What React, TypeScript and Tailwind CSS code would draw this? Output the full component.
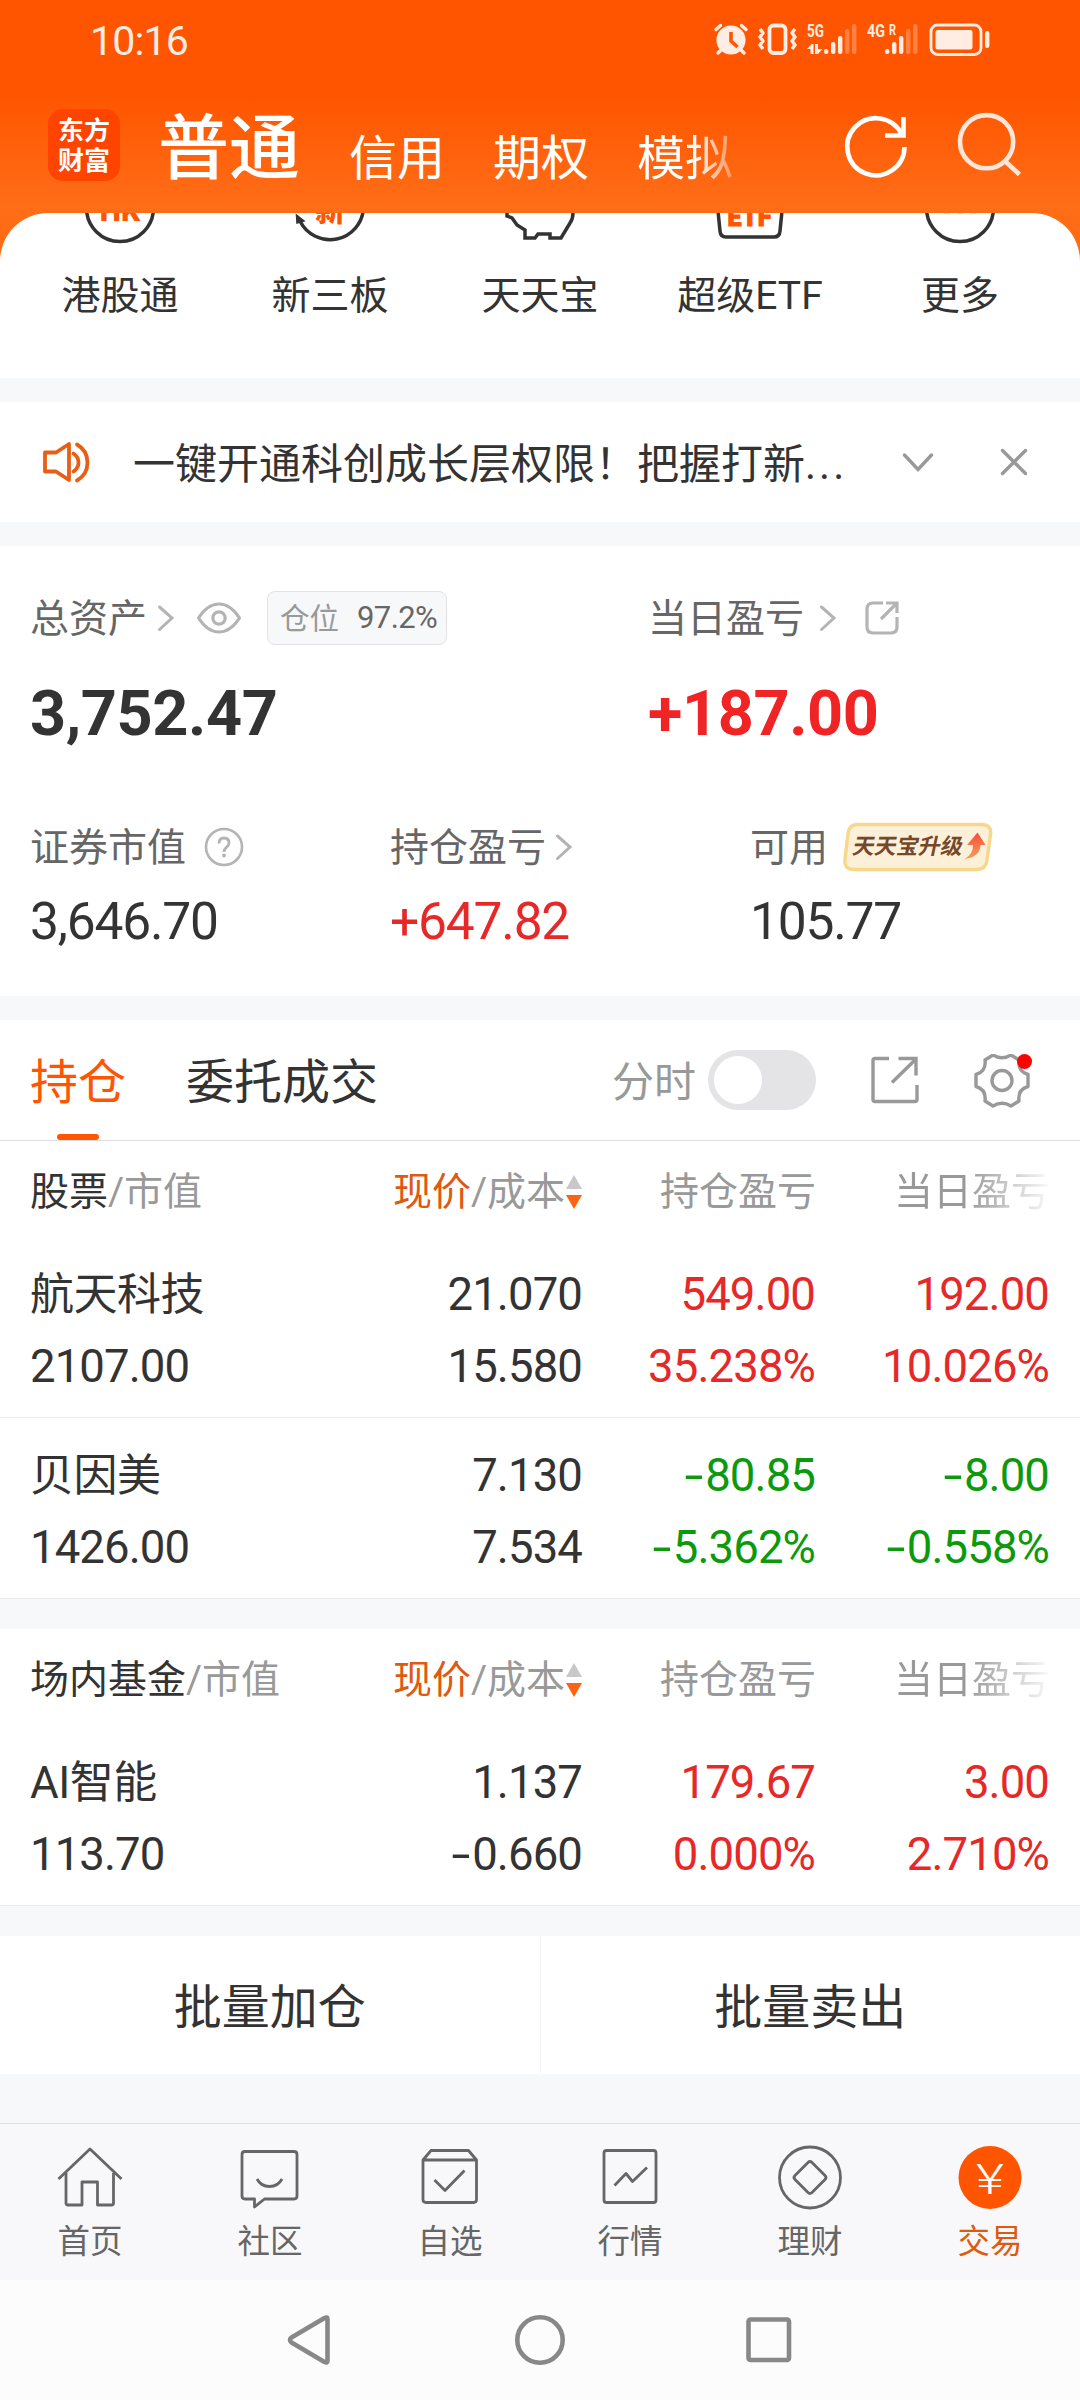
import type { ReactNode } from 'react';

type Tone = 'dark' | 'up' | 'down';

interface Cell {
  top: string;
  bottom: string;
  tone: Tone;
}

interface Holding {
  name: string;
  value: string;
  cells: Cell[];
}

const STOCKS: Holding[] = [
  {
    name: '航天科技',
    value: '2107.00',
    cells: [
      { top: '21.070', bottom: '15.580', tone: 'dark' },
      { top: '549.00', bottom: '35.238%', tone: 'up' },
      { top: '192.00', bottom: '10.026%', tone: 'up' },
    ],
  },
  {
    name: '贝因美',
    value: '1426.00',
    cells: [
      { top: '7.130', bottom: '7.534', tone: 'dark' },
      { top: '-80.85', bottom: '-5.362%', tone: 'down' },
      { top: '-8.00', bottom: '-0.558%', tone: 'down' },
    ],
  },
];

const FUNDS: Holding[] = [
  {
    name: 'AI智能',
    value: '113.70',
    cells: [
      { top: '1.137', bottom: '-0.660', tone: 'dark' },
      { top: '179.67', bottom: '0.000%', tone: 'up' },
      { top: '3.00', bottom: '2.710%', tone: 'up' },
    ],
  },
];

const TONES: Record<Tone, string> = {
  dark: 'text-[#333]',
  up: 'text-[#e62828]',
  down: 'text-[#0c9a0c]',
};

// Bars of a signal meter, from short to tall. The last two are unlit.
const BARS = [5, 12, 18, 25, 30];

function Signal({ x }: { x: number }) {
  return (
    <g>
      {BARS.map((h, i) => (
        <rect
          key={h}
          x={x + i * 7}
          y={54 - h}
          width="4.4"
          height={h}
          rx="2"
          opacity={i > 2 ? 0.3 : 1}
        />
      ))}
    </g>
  );
}

function StatusIcons() {
  return (
    <svg width="280" height="40" viewBox="712 20 280 40" fill="#ffece2">
      {/* Alarm */}
      <circle cx="731" cy="40" r="14.6" />
      <g fill="none" stroke="#ffece2" strokeWidth="3.4" strokeLinecap="round">
        <path d="M716 29.5l4.500-4M746 29.5l-4.500-4M721 50l-3 3M741 50l3 3" />
      </g>
      <path d="M731 32v9l6.500 6" fill="none" stroke="#ff5500" strokeWidth="3.6" />
      {/* Vibrate */}
      <g fill="none" stroke="#ffece2">
        <rect x="769.5" y="25.5" width="16" height="27.5" rx="4" strokeWidth="3.8" />
        <path
          d="M760 29l3 4-3 4 3 4-3 4 3 4M795 29l-3 4 3 4-3 4 3 4-3 4"
          strokeWidth="3.4"
          strokeLinejoin="round"
        />
      </g>
      <text x="807" y="37" fontSize="18" fontWeight="700" textLength="17" lengthAdjust="spacingAndGlyphs">
        5G
      </text>
      <path d="M807 49l4.500-5h2V54h-3v-5zM815 44h3v5h4.500L818 54h-3z" />
      <Signal x={824} />
      <text x="867" y="37" fontSize="18" fontWeight="700" textLength="18" lengthAdjust="spacingAndGlyphs">
        4G
      </text>
      <text x="889" y="35" fontSize="15" fontWeight="700" textLength="7" lengthAdjust="spacingAndGlyphs">
        R
      </text>
      <Signal x={885} />
      {/* Battery */}
      <rect x="931" y="25" width="50" height="29.5" rx="6.5" fill="none" stroke="#ffece2" strokeWidth="2.8" />
      <rect x="935.5" y="30" width="37" height="19.5" rx="2" />
      <rect x="985" y="31" width="4.4" height="17" rx="2.2" />
    </svg>
  );
}

function Chevron() {
  return (
    <svg width="18" height="28" viewBox="0 0 18 28" fill="none" stroke="#b4b4b4" strokeWidth="3" strokeLinecap="round">
      <path d="M2.500 3L15 14 2.500 25.500" />
    </svg>
  );
}

function Header() {
  return (
    <header className="h-[213px] text-white">
      <div className="flex h-20 items-center justify-between pl-[90px] pr-[88px]">
        <span className="mt-[3px] text-[41px] leading-none tracking-[-0.8px] text-[#ffece2]">10:16</span>
        <StatusIcons />
      </div>
      <div className="flex h-[133px] items-start pl-12">
        <div className="mt-[29px] h-[72px] w-[72px] rounded-[15px] bg-[#ff4400] pt-[7px] text-center text-[26px] font-bold leading-[30px]">
          <div>东方</div>
          <div>财富</div>
        </div>
        <div className="ml-[38px] mt-[33px] text-[71px] font-medium leading-[72px]">普通</div>
        <div className="ml-[49px] mt-[55px] flex gap-[48px] text-[48px] leading-[48px]">
          <span>信用</span>
          <span>期权</span>
          <span className="bg-linear-to-r from-white from-60% to-white/30 bg-clip-text text-transparent">模拟</span>
        </div>
        <svg className="ml-[107px] mt-[27px]" width="190" height="76" viewBox="840 107 190 76" fill="none" strokeWidth="4.6">
          <path d="M904.500 147A28.600 28.600 0 1 1 901.500 134" stroke="#fff" />
          <path d="M903.500 117v18.500H885" stroke="#fff" />
          <g stroke="#ffe6d9">
            <circle cx="986.6" cy="141.7" r="26.6" />
            <path d="M1005.500 161.500l14 13" />
          </g>
        </svg>
      </div>
    </header>
  );
}

function Entry({ label, children }: { label: string; children: ReactNode }) {
  return (
    <div className="flex flex-col items-center">
      <svg width="80" height="34" viewBox="0 0 80 34" fill="none" stroke="#333" strokeWidth="3.5">
        {children}
      </svg>
      <span className="mt-[29px] text-[39px] leading-10 text-[#333]">{label}</span>
    </div>
  );
}

// The sheet is scrolled under the header, so only the lower part of each icon shows.
function Entries() {
  return (
    <section className="grid h-[165px] grid-cols-5 rounded-t-[48px] bg-white px-[15px]">
      <Entry label="港股通">
        <circle cx="40" cy="-5" r="33.5" />
        <text x="40" y="8" fontSize="30" fontWeight="900" fill="#ff5500" stroke="none" textAnchor="middle">
          HK
        </text>
      </Entry>
      <Entry label="新三板">
        <path d="M10 8A33.500 33.500 0 0 0 73.500 -5" />
        <path d="M6.500 2l7.500 6-7 2z" fill="#333" strokeWidth="1.5" />
        <text x="40" y="8" fontSize="30" fontWeight="900" fill="#ff5500" stroke="none" textAnchor="middle">
          新
        </text>
      </Entry>
      <Entry label="天天宝">
        <path d="M7 0v3l5 2 5 7 8 5v8h10l3-4h12v4h11l9-15q3-4 3-10" />
      </Entry>
      <Entry label="超级ETF">
        <path d="M8 -2l2 20q.5 6 6 6H64q5.500 0 6-6l2-20" />
        <text
          x="17.5"
          y="13"
          fontSize="25"
          fontWeight="900"
          fill="#ff5500"
          stroke="#ff5500"
          strokeWidth="1"
          strokeLinejoin="round"
          textLength="44"
        >
          ETF
        </text>
      </Entry>
      <Entry label="更多">
        <circle cx="40" cy="-5" r="33.5" />
        <path d="M24 0h6M37 0h6M50 0h6" stroke="#ffb48a" strokeWidth="1" />
      </Entry>
    </section>
  );
}

function Notice() {
  return (
    <section className="mt-6 flex h-[120px] items-center bg-white pl-[41px] pr-[50px]">
      <svg width="50" height="44" viewBox="41 440 50 44" fill="none" stroke="#e85f14" strokeWidth="3.8" strokeLinejoin="round" strokeLinecap="round">
        <path d="M45 452.500h11L69 444v36l-13-8.500H45z" />
        <path d="M73.500 453.500q5 3.500 5 9t-5 9M77 444.500q10.500 6 10.500 18t-10.500 18" />
      </svg>
      <p className="ml-[42px] mt-[5px] flex-1 whitespace-nowrap text-[42px] leading-[48px] text-[#333]">
        一键开通科创成长层权限！把握打新<span className="tracking-[3px]">...</span>
      </p>
      <svg width="130" height="30" viewBox="900 447 130 30" fill="none" stroke="#999" strokeWidth="3.4" strokeLinecap="round">
        <path d="M904.500 455l13.500 14.500L931.500 455M1002.500 450.500l23 23M1025.500 450.500l-23 23" />
      </svg>
    </section>
  );
}

function Assets() {
  return (
    <section className="mt-6 h-[450px] bg-white pl-[30px] text-[39px] leading-10 text-[#666]">
      <div className="flex h-[144px] items-center">
        <div className="flex w-[618px] items-center">
          <span className="mt-[2px]">总资产</span>
          <span className="ml-[10px]"><Chevron /></span>
          <svg className="ml-[20px]" width="48" height="36" viewBox="195 599 48 36" fill="none" stroke="#b4b4b4" strokeWidth="3.2">
            <path d="M198.500 617q9-14 20.500-14t20.500 14q-9 14-20.500 14t-20.500-14z" strokeLinejoin="round" />
            <circle cx="219" cy="617" r="6.2" />
          </svg>
          <div className="ml-6 flex h-[54px] w-[180px] items-center rounded-lg border border-[#e3e3e5] bg-[#f7f8fa] pl-3 text-[29.5px]">
            <span className="mt-[2px] text-[#999]">仓位</span>
            <span className="ml-[18px] text-[31px] tracking-[-0.6px]">97.2%</span>
          </div>
        </div>
        <span className="mt-[2px]">当日盈亏</span>
        <span className="ml-[15px]"><Chevron /></span>
        <svg className="ml-[27px]" width="36" height="36" viewBox="864 600 36 36" fill="none" stroke="#b4b4b4" strokeWidth="3.2">
          <path d="M883 603h-10q-6 0-6 6v18q0 6 6 6h18q6 0 6-6v-10M886 603h11v10M896 604l-15 15" />
        </svg>
      </div>
      <div className="flex h-[46px] items-center text-[63px] font-bold leading-none tracking-[-0.4px]">
        <span className="w-[618px] text-[#333]">3,752.47</span>
        <span className="text-[#f02424]">+187.00</span>
      </div>
      <div className="mt-[84px] flex h-[54px] items-center">
        <div className="flex w-[360px] items-center">
          <span className="mt-px">证券市值</span>
          <svg className="ml-[18px]" width="40" height="40" viewBox="0 0 40 40" fill="none" stroke="#b4b4b4" strokeWidth="2.6">
            <circle cx="20" cy="20" r="18" />
            <path d="M15 16.500q0-5.500 5-5.500t5 5q0 2.500-2.800 4.700-2.200 1.700-2.200 4.300" strokeWidth="2.8" />
            <circle cx="20" cy="28.5" r="1.9" fill="#b4b4b4" stroke="none" />
          </svg>
        </div>
        <div className="flex w-[360px] items-center">
          <span className="mt-px">持仓盈亏</span>
          <span className="ml-[9px]"><Chevron /></span>
        </div>
        <span className="mt-px">可用</span>
        <div className="relative ml-[15px] flex h-[50px] w-[150px] items-center">
          <svg className="absolute inset-0" width="150" height="50" viewBox="0 0 150 50">
            <defs>
              <linearGradient id="tag-arrow" x1="0" y1="0" x2="0" y2="1">
                <stop offset="0" stopColor="#f4503c" />
                <stop offset="1" stopColor="#fb9a5a" />
              </linearGradient>
            </defs>
            <path
              d="M14 2.500H138q11 0 9.500 10l-3.500 26q-1.500 9-10 9H11.500q-11 0-9.500-10l3-26q1.500-9 9-9z"
              fill="#fdf0d8"
              stroke="#f7d88a"
              strokeWidth="3.4"
            />
            <path d="M121.500 37q9-5 8.500-14h-6l10.500-12.500 8 12.500h-5q-.5 12-16 14z" fill="url(#tag-arrow)" />
          </svg>
          <span className="relative -mt-px ml-[10px] -skew-x-12 text-[22px] font-bold text-[#75482a]">天天宝升级</span>
        </div>
      </div>
      <div className="mt-[20px] flex h-14 items-center text-[51.5px] leading-none tracking-[-1.2px] text-[#333]">
        <span className="w-[360px]">3,646.70</span>
        <span className="w-[360px] text-[#e62828]">+647.82</span>
        <span>105.77</span>
      </div>
    </section>
  );
}

function Tabs() {
  return (
    <div className="flex h-[121px] border-b border-[#e0e0e0] pl-[30px] text-[48px] leading-[48px]">
      <div className="flex w-[96px] flex-col items-center text-[#ff5500]">
        <span className="mt-[39px]">持仓</span>
        <span className="mt-[27px] h-[6px] w-[42px] rounded-full bg-[#ff5500]" />
      </div>
      <span className="ml-[60px] mt-[39px] text-[#333]">委托成交</span>
      <span className="ml-[234px] mt-[39px] text-[42px] text-[#999]">分时</span>
      <div className="ml-[12px] mt-[30px] flex h-[60px] w-[108px] items-center rounded-full bg-[#e4e4e6] pl-1.5">
        <div className="size-12 rounded-full bg-white" />
      </div>
      <svg className="ml-[52px] mt-[34px]" width="170" height="56" viewBox="868 1054 170 56" fill="none" stroke="#999" strokeWidth="3.4">
        <path d="M889 1058.500h-14q-2 0-2 2v39q0 2 2 2h40q2 0 2-2v-14.500M898.500 1058.500H916v17M915 1060l-23 22.500" />
        <path
          d="M993 1055q9 5.500 18 0l8 5q-1.500 11.500 9 14.500v12q-10.500 3-9 14.500l-8 5q-9-5.500-18 0l-8-5q1.500-11.500-9-14.500v-12q10.500-3 9-14.500z"
          strokeLinejoin="round"
        />
        <circle cx="1002" cy="1080.5" r="10" />
        <circle cx="1024.5" cy="1061.5" r="7.5" fill="#fe0000" stroke="none" />
      </svg>
    </div>
  );
}

function Num({ children }: { children: string }) {
  if (!children.startsWith('-')) return <>{children}</>;
  // Stretch the hyphen so that it reads as a minus sign next to the digits.
  return (
    <>
      <span className="mr-[3px] inline-block w-[17px] origin-right scale-x-150 text-right">-</span>
      {children.slice(1)}
    </>
  );
}

function HoldingTable({ title, rows }: { title: string; rows: Holding[] }) {
  return (
    <div className="bg-white">
      <div className="grid h-24 grid-cols-[1fr_232px_233px_234px] items-center pl-[30px] pr-[30px] pt-[5px] text-[39px] leading-10 text-[#999]">
        <span>
          <span className="text-[#333]">{title}</span>/市值
        </span>
        <span className="flex items-center justify-end">
          <span className="text-[#dd5a10]">现价</span>/成本
          <svg width="18" height="36" viewBox="0 0 18 36">
            <path d="M9 1l8 14H1z" fill="#c8c8c8" />
            <path d="M9 35l8-14H1z" fill="#fa6414" />
          </svg>
        </span>
        <span className="text-right">持仓盈亏</span>
        <span className="bg-linear-to-r from-[#999] from-65% to-[#999]/5 bg-clip-text text-right text-transparent">
          当日盈亏
        </span>
      </div>
      {rows.map((row) => (
        <div
          key={row.name}
          className="grid h-[181px] grid-cols-[1fr_232px_233px_234px] border-b border-[#ebebed] pl-[30px] pr-[31px] pt-[22px] text-[45.5px] leading-[72px] tracking-[-0.9px]"
        >
          <div className="text-[#333]">
            <div className="text-[44px] tracking-[-0.5px]">{row.name}</div>
            <div>{row.value}</div>
          </div>
          {row.cells.map((cell, i) => (
            <div key={i} className={`text-right ${TONES[cell.tone]}`}>
              <div><Num>{cell.top}</Num></div>
              <div><Num>{cell.bottom}</Num></div>
            </div>
          ))}
        </div>
      ))}
    </div>
  );
}

function NavItem({ label, active, children }: { label: string; active?: boolean; children: ReactNode }) {
  return (
    <div className={`flex flex-1 flex-col items-center pt-[18px] ${active ? 'text-[#dd5a10]' : 'text-[#666]'}`}>
      <svg width="70" height="70" viewBox="0 0 70 70" fill="none" stroke="#666" strokeWidth="2.8" strokeLinejoin="round">
        {children}
      </svg>
      <span className="mt-[14px] text-[32.5px] leading-8">{label}</span>
    </div>
  );
}

function BottomNav() {
  return (
    <nav className="flex h-[157px] border-t border-[#dfe0e3] bg-[#f8f8fb]">
      <NavItem label="首页">
        <path d="M3.500 37L35 7l31.500 30" />
        <path d="M11 31v30q0 2 2 2h14V40h15.500v23H56.500q2 0 2-2V31" />
      </NavItem>
      <NavItem label="社区">
        <path d="M10 9.500h49q3 0 3 3v41.500q0 3-3 3H29.500l-10 8v-8H10q-3 0-3-3V12.500q0-3 3-3z" />
        <path d="M22 37q4 7.500 12.500 7.500T47 37" />
      </NavItem>
      <NavItem label="自选">
        <path d="M8 18h53.500v39.500q0 3-3 3H11q-3 0-3-3zM8 18l8-9.500h37.500l8 9.500" />
        <path d="M19.500 38L30 48.500 49.500 28.500" />
      </NavItem>
      <NavItem label="行情">
        <rect x="9" y="8.5" width="52" height="52" rx="2.5" />
        <path d="M19.500 43.500l11.500-12 6.500 8 14.500-14" />
      </NavItem>
      <NavItem label="理财">
        <circle cx="35" cy="35.5" r="30.5" />
        <path d="M33 20.500q2-2 4 0l13 13q2 2 0 4l-13 13q-2 2-4 0l-13-13q-2-2 0-4z" />
      </NavItem>
      <NavItem label="交易" active>
        <circle cx="35" cy="35.5" r="31.5" fill="#ff5500" stroke="none" />
        <text
          x="21"
          y="51.5"
          fontSize="42"
          fontWeight="300"
          fill="#fff"
          stroke="none"
          textLength="28"
          lengthAdjust="spacingAndGlyphs"
        >
          ¥
        </text>
      </NavItem>
    </nav>
  );
}

function SystemNav() {
  return (
    <div className="grid h-[120px] grid-cols-[230px_230px_230px] place-items-center justify-center bg-[#fcfcfc]">
      <svg width="52" height="56" viewBox="0 0 52 56" fill="none" stroke="#888" strokeWidth="4.6" strokeLinejoin="round">
        <path d="M6 28q0-1.500 1.500-2.500L40.500 6q3-1.500 3 1v42q0 2.500-3 1L7.500 30.500Q6 29.500 6 28z" />
      </svg>
      <svg width="52" height="52" viewBox="0 0 52 52" fill="none" stroke="#888" strokeWidth="4.6">
        <circle cx="26" cy="26" r="22.7" />
      </svg>
      <svg width="52" height="52" viewBox="0 0 52 52" fill="none" stroke="#888" strokeWidth="4.6">
        <rect x="4.5" y="5.5" width="40.5" height="40.5" rx="2" />
      </svg>
    </div>
  );
}

export default function App() {
  return (
    <div
      lang="zh-CN"
      className="h-[2400px] w-[1080px] overflow-hidden bg-[#f7f8fa] font-['Roboto','Noto_Sans_CJK_SC',sans-serif]"
    >
      <div className="bg-[linear-gradient(to_bottom,#ff5500_95px,#ff6d17_205px,#ff6a12_270px)]">
        <Header />
        <Entries />
      </div>
      <Notice />
      <Assets />
      <div className="mt-6 bg-white">
        <Tabs />
        <HoldingTable title="股票" rows={STOCKS} />
      </div>
      <div className="mt-[30px]">
        <HoldingTable title="场内基金" rows={FUNDS} />
      </div>
      <div className="mb-[49px] mt-[30px] flex h-[138px] items-center bg-white text-center text-[48px] leading-[48px] text-[#333]">
        <span className="flex-1 pt-[6px]">批量加仓</span>
        <span className="h-full w-px bg-[#f4f4f6]" />
        <span className="flex-1 pt-[6px]">批量卖出</span>
      </div>
      <BottomNav />
      <SystemNav />
    </div>
  );
}
